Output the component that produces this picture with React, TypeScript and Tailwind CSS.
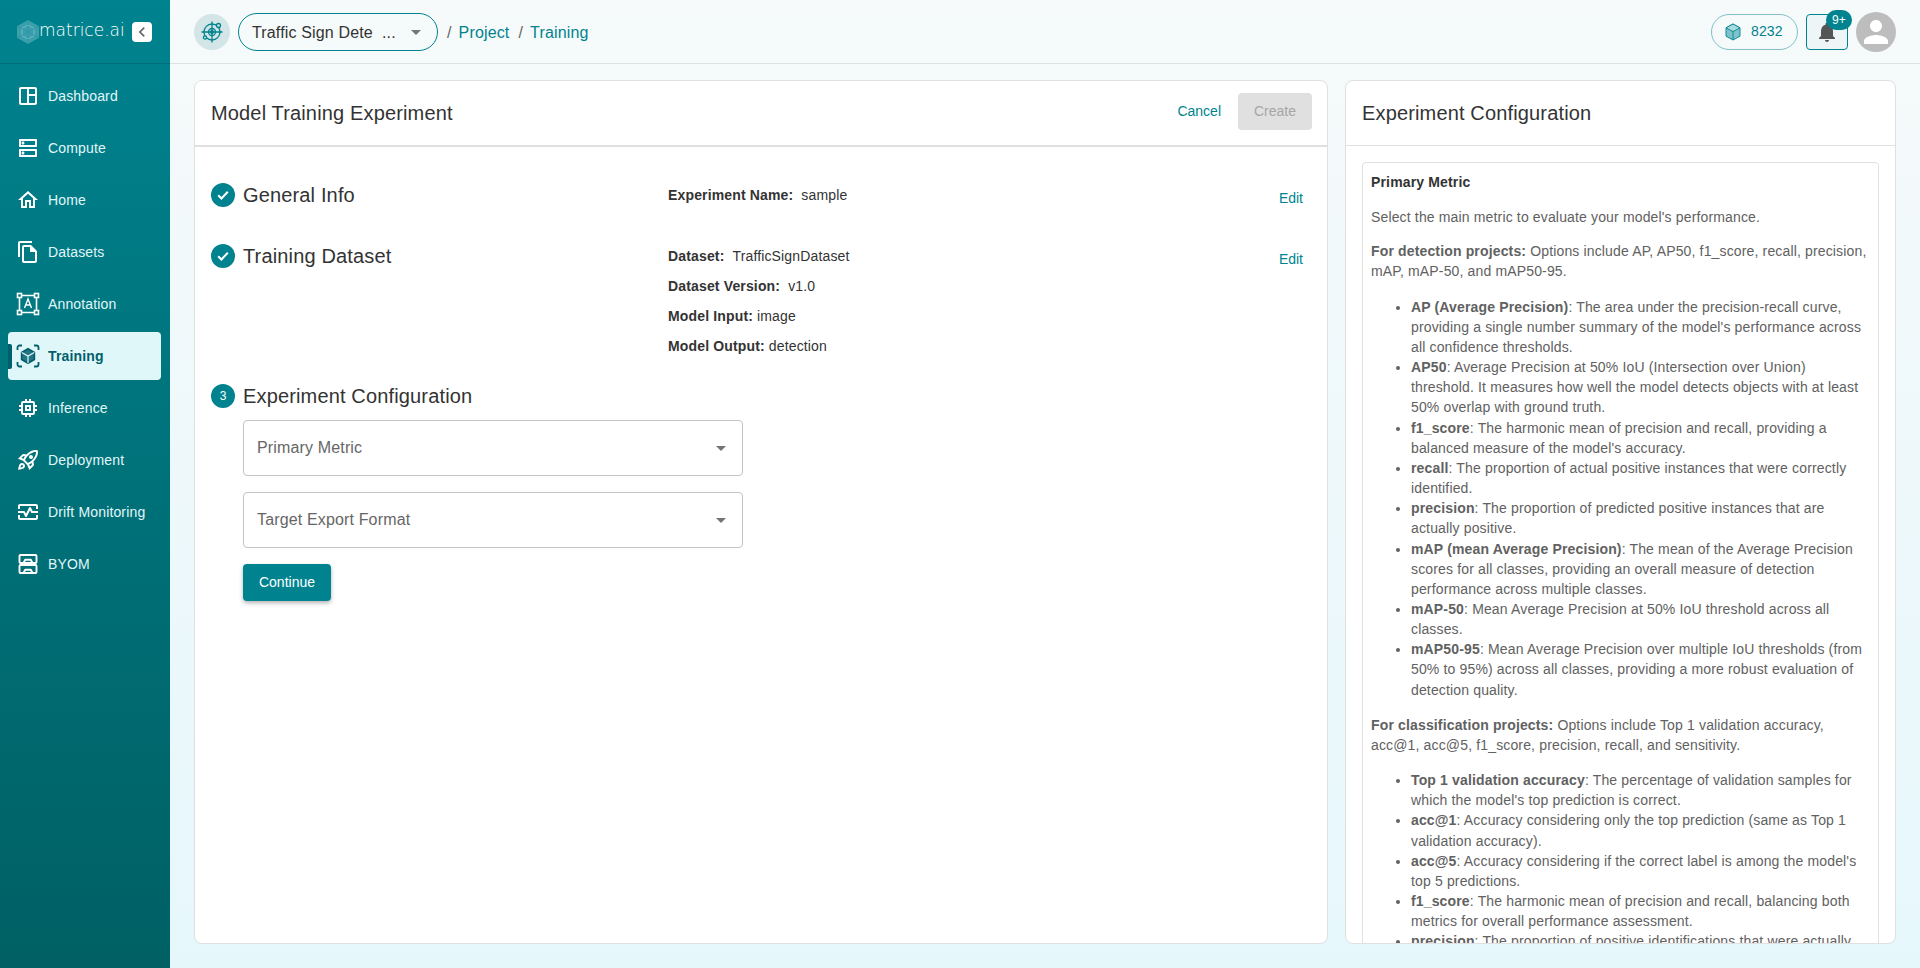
import React from "react";
import {
  MdOutlineSpaceDashboard,
  MdOutlineDns,
  MdOutlineHome,
  MdOutlineFileCopy,
  MdOutlineMemory,
  MdOutlineRocketLaunch,
  MdOutlineMonitorHeart,
  MdArrowDropDown,
  MdNotifications,
  MdPerson,
  MdChevronLeft,
} from "react-icons/md";

function AnnotationIcon() {
  return (
    <svg width="24" height="24" viewBox="0 0 24 24" fill="none" stroke="currentColor" strokeWidth="1.6">
      <rect x="1.500" y="1.500" width="4" height="4" />
      <rect x="18.500" y="1.500" width="4" height="4" />
      <rect x="1.500" y="18.500" width="4" height="4" />
      <rect x="18.500" y="18.500" width="4" height="4" />
      <path d="M5.500 3.500h13M5.500 20.500h13M3.500 5.500v13M20.500 5.500v13" />
      <path d="M8.500 16l3.500-9 3.500 9M9.700 13h4.600" strokeWidth="1.4" />
    </svg>
  );
}

function TrainingIcon() {
  return (
    <svg width="24" height="24" viewBox="0 0 24 24" fill="none" stroke="currentColor" strokeWidth="1.8">
      <path d="M1.500 6V3.500a2 2 0 0 1 2-2H6M18 1.500h2.500a2 2 0 0 1 2 2V6M22.500 18v2.500a2 2 0 0 1-2 2H18M6 22.500H3.500a2 2 0 0 1-2-2V18" />
      <path d="M12 4.800l6.300 3.600v7.200L12 19.200l-6.300-3.600V8.400z" fill="currentColor" fillOpacity="0.85" stroke="currentColor" />
      <path d="M5.700 8.400L12 12l6.300-3.600M12 12v7.200" stroke="#e0f7fa" strokeWidth="1.2" />
    </svg>
  );
}

function ByomIcon() {
  return (
    <svg width="24" height="24" viewBox="0 0 24 24" fill="none" stroke="currentColor" strokeWidth="1.9" strokeLinejoin="round">
      <rect x="3.500" y="3" width="17" height="8" rx="1" />
      <rect x="3.500" y="13" width="17" height="8" rx="1" />
      <path d="M7.500 11l1.700-3.200h5.600L16.500 11" />
      <path d="M7.500 21l1.700-3.200h5.600L16.500 21" />
    </svg>
  );
}

function Logo() {
  return (
    <svg width="24" height="26" viewBox="0 0 24 26" fill="none">
      <path d="M12 1l11 6.200v11.600L12 25 1 18.800V7.200z" fill="#4aa6b4" fillOpacity="0.8" />
      <path d="M12 6l6 3.400v7.200L12 20l-6-3.400V9.400z" stroke="#7ec8d2" strokeWidth="0.7" />
      <path d="M1 7.200l11 5.800 11-5.800M12 13v12M12 1v12M1 18.800L12 13l11 5.800" stroke="#2b93a3" strokeWidth="0.7" />
    </svg>
  );
}

function ProjectIcon() {
  return (
    <svg width="24" height="24" viewBox="0 0 24 24" fill="none" stroke="#00838f" strokeWidth="1.3">
      <circle cx="12" cy="12" r="8" />
      <circle cx="12" cy="12" r="3.500" />
      <circle cx="12" cy="12" r="1.400" fill="#00838f" />
      <path d="M12 1.500v21M1.500 12h21" />
      <circle cx="18.500" cy="5.500" r="2" fill="#d3e5e7" />
      <circle cx="5" cy="17.500" r="1.600" fill="#d3e5e7" />
    </svg>
  );
}

function CubeIcon() {
  return (
    <svg width="18" height="18" viewBox="0 0 18 18" stroke="#00838f" strokeWidth="0.9" strokeLinejoin="round">
      <path d="M9 1l7 3.800v8.400L9 17l-7-3.800V4.800z" fill="#7cc3cb" />
      <path d="M2 4.800L9 8.600l7-3.800L9 1z" fill="#a9dae0" />
      <path d="M9 8.600V17" fill="none" />
    </svg>
  );
}

function CheckGlyph() {
  return (
    <svg width="16" height="16" viewBox="0 0 16 16" fill="none" stroke="white" strokeWidth="2">
      <path d="M3.200 8.300l3.200 3.200 6.400-6.800" />
    </svg>
  );
}

const nav: { label: string; icon: React.ReactNode; active?: boolean }[] = [
  { label: "Dashboard", icon: <MdOutlineSpaceDashboard size={24} /> },
  { label: "Compute", icon: <MdOutlineDns size={24} /> },
  { label: "Home", icon: <MdOutlineHome size={24} /> },
  { label: "Datasets", icon: <MdOutlineFileCopy size={24} /> },
  { label: "Annotation", icon: <AnnotationIcon /> },
  { label: "Training", icon: <TrainingIcon />, active: true },
  { label: "Inference", icon: <MdOutlineMemory size={24} /> },
  { label: "Deployment", icon: <MdOutlineRocketLaunch size={24} /> },
  { label: "Drift Monitoring", icon: <MdOutlineMonitorHeart size={24} /> },
  { label: "BYOM", icon: <ByomIcon /> },
];

function Sidebar() {
  return (
    <aside className="w-[170px] shrink-0 h-[968px] bg-gradient-to-b from-[#00838f] to-[#006064] flex flex-col">
      <div className="h-[64px] border-b border-[#006f7a] flex items-center pl-[16px] shrink-0">
        <Logo />
        <span className="w-[93px] ml-[-1px] text-[17px] leading-[24px] font-extralight text-white font-['DejaVu_Sans',sans-serif] tracking-normal -mt-[3px] whitespace-nowrap">matrice.ai</span>
        <span className="w-[20px] h-[20px] bg-white rounded-[4px] flex items-center justify-center text-[#666]">
          <MdChevronLeft size={20} />
        </span>
      </div>
      <nav className="flex flex-col pt-[6px]">
        {nav.map((n) =>
          n.active ? (
            <div key={n.label} className="relative ml-[8px] w-[153px] h-[48px] my-[2px] rounded-[4px] bg-[#e0f7fa] flex items-center pl-[8px] text-[#005f6b] gap-[8px] text-[14px] font-bold tracking-[0.15px]">
              <span className="absolute left-0 top-[12px] w-[4px] h-[25px] bg-[#00606b] rounded-r-[2px]" />
              <span className="w-[24px] flex justify-center">{n.icon}</span>
              <span>{n.label}</span>
            </div>
          ) : (
            <div key={n.label} className="h-[52px] flex items-center pl-[16px] text-white gap-[8px]">
              <span className="w-[24px] flex justify-center">{n.icon}</span>
              <span className="text-[14px] text-[#e0f7fa] tracking-[0.15px]">{n.label}</span>
            </div>
          )
        )}
      </nav>
    </aside>
  );
}

function Header() {
  return (
    <header className="h-[64px] border-b border-[#dde3e4] flex items-center pl-[24px] pr-[24px] shrink-0 tracking-[0.15px]">
      <span className="w-[36px] h-[36px] rounded-full bg-[#d3e5e7] flex items-center justify-center">
        <ProjectIcon />
      </span>
      <div className="ml-[8px] w-[200px] h-[38px] rounded-[19px] border border-[#00838f] flex items-center pl-[13px] pr-[9px] justify-between text-[16px] text-[#333]">
        <span className="pt-[2px]">Traffic Sign Dete&nbsp; ...</span>
        <MdArrowDropDown size={24} className="text-[#757575]" />
      </div>
      <span className="ml-[9px] text-[16px] text-[#666] pt-[2px]">/</span>
      <span className="ml-[7px] text-[16px] text-[#00838f] pt-[2px]">Project</span>
      <span className="ml-[9px] text-[16px] text-[#666] pt-[2px]">/</span>
      <span className="ml-[7px] text-[16px] text-[#00838f] pt-[2px]">Training</span>
      <div className="ml-auto flex items-center">
        <div className="w-[87px] h-[36px] rounded-[18px] border border-[#80c1c7] flex items-center pl-[12px] gap-[9px] text-[14px] text-[#00838f]">
          <CubeIcon />
          <span>8232</span>
        </div>
        <div className="relative ml-[8px] w-[42px] h-[36px] rounded-[4px] border border-[#00838f] bg-[#eef5f7] flex items-center justify-center text-[#555]">
          <MdNotifications size={24} />
          <span className="absolute -top-[5px] left-[19px] w-[26px] h-[20px] rounded-full bg-[#00838f] text-white text-[12px] flex items-center justify-center">9+</span>
        </div>
        <div className="ml-[8px] w-[40px] h-[40px] rounded-full bg-[#bdbdbd] flex items-center justify-center text-white">
          <MdPerson size={36} />
        </div>
      </div>
    </header>
  );
}

function StepIcon({ n }: { n?: number }) {
  return (
    <span className="w-[24px] h-[24px] rounded-full bg-[#00838f] text-white flex items-center justify-center text-[12px] shrink-0">
      {n ? n : <CheckGlyph />}
    </span>
  );
}

function Detail({ label, value, gap }: { label: string; value: string; gap?: boolean }) {
  return (
    <div className="h-[30px] flex items-center text-[14px] text-[#333] tracking-[0.15px]">
      <b className={gap ? "mr-[8px]" : "mr-[4px]"}>{label}</b>
      <span>{value}</span>
    </div>
  );
}

function SelectBox({ label }: { label: string }) {
  return (
    <div className="w-[500px] h-[56px] rounded-[4px] border border-[#c4c4c4] flex items-center pl-[13px] pr-[9px] justify-between text-[16px] text-[#666] tracking-[0.15px]">
      <span>{label}</span>
      <MdArrowDropDown size={24} className="text-[#757575]" />
    </div>
  );
}

function MainCard() {
  return (
    <section className="w-[1134px] rounded-[8px] border border-[#e0e0e0] bg-white flex flex-col">
      <div className="h-[66px] border-b-2 border-[#e0e0e0] flex items-center pl-[16px] pr-[15px] shrink-0">
        <h1 className="text-[20px] text-[#333] tracking-[0.15px]">Model Training Experiment</h1>
        <span className="ml-auto text-[14px] text-[#00838f] -mt-[3px] mr-[1px]">Cancel</span>
        <span className="ml-[16px] w-[74px] h-[37px] rounded-[4px] bg-[#e0e0e0] text-[#a6a6a6] text-[14px] flex items-center justify-center -mt-[4px]">Create</span>
      </div>
      <div className="pl-[16px] pr-[24px] pt-[36px]">
        <div className="flex h-[61px]">
          <div className="w-[457px] flex items-start gap-[8px] shrink-0">
            <StepIcon />
            <h2 className="text-[20px] leading-[24px] text-[#333] tracking-[0.15px]">General Info</h2>
          </div>
          <div className="flex-1 -mt-[3px]">
            <Detail label="Experiment Name:" value="sample" gap />
          </div>
          <span className="text-[14px] text-[#00838f] mt-[5px]">Edit</span>
        </div>
        <div className="flex h-[140px]">
          <div className="w-[457px] flex items-start gap-[8px] shrink-0">
            <StepIcon />
            <h2 className="text-[20px] leading-[24px] text-[#333] tracking-[0.15px]">Training Dataset</h2>
          </div>
          <div className="flex-1 -mt-[3px]">
            <Detail label="Dataset:" value="TrafficSignDataset" gap />
            <Detail label="Dataset Version:" value="v1.0" gap />
            <Detail label="Model Input:" value="image" />
            <Detail label="Model Output:" value="detection" />
          </div>
          <span className="text-[14px] text-[#00838f] mt-[5px]">Edit</span>
        </div>
        <div className="flex items-center gap-[8px]">
          <StepIcon n={3} />
          <h2 className="text-[20px] leading-[24px] text-[#333] tracking-[0.15px]">Experiment Configuration</h2>
        </div>
        <div className="ml-[32px] mt-[12px] flex flex-col gap-[16px]">
          <SelectBox label="Primary Metric" />
          <SelectBox label="Target Export Format" />
          <button className="w-[88px] h-[37px] rounded-[4px] bg-[#00838f] text-white text-[14px] shadow-[0_2px_4px_rgba(0,0,0,0.3)]">Continue</button>
        </div>
      </div>
    </section>
  );
}

function Li({ b, t }: { b: string; t: string }) {
  return (
    <li className="list-disc">
      <b>{b}</b>: {t}
    </li>
  );
}

function ConfigCard() {
  return (
    <section className="w-[551px] rounded-[8px] border border-[#e0e0e0] bg-white flex flex-col overflow-hidden">
      <div className="h-[65px] border-b border-[#e0e0e0] flex items-center pl-[16px] shrink-0">
        <h1 className="text-[20px] text-[#333] tracking-[0.15px]">Experiment Configuration</h1>
      </div>
      <div className="flex-1 min-h-0 px-[16px] pt-[16px] overflow-hidden">
        <div className="border border-[#e0e0e0] rounded-[4px] px-[8px] pt-[9px] text-[14px] leading-[20.16px] tracking-[0.15px] text-[#616161]">
          <p className="font-bold text-[#333]">Primary Metric</p>
          <p className="mt-[15px]">Select the main metric to evaluate your model's performance.</p>
          <p className="mt-[14px]"><b>For detection projects:</b> Options include AP, AP50, f1_score, recall, precision, mAP, mAP-50, and mAP50-95.</p>
          <ul className="mt-[15px] pl-[40px]">
            <Li b="AP (Average Precision)" t="The area under the precision-recall curve, providing a single number summary of the model's performance across all confidence thresholds." />
            <Li b="AP50" t="Average Precision at 50% IoU (Intersection over Union) threshold. It measures how well the model detects objects with at least 50% overlap with ground truth." />
            <Li b="f1_score" t="The harmonic mean of precision and recall, providing a balanced measure of the model's accuracy." />
            <Li b="recall" t="The proportion of actual positive instances that were correctly identified." />
            <Li b="precision" t="The proportion of predicted positive instances that are actually positive." />
            <Li b="mAP (mean Average Precision)" t="The mean of the Average Precision scores for all classes, providing an overall measure of detection performance across multiple classes." />
            <Li b="mAP-50" t="Mean Average Precision at 50% IoU threshold across all classes." />
            <Li b="mAP50-95" t="Mean Average Precision over multiple IoU thresholds (from 50% to 95%) across all classes, providing a more robust evaluation of detection quality." />
          </ul>
          <p className="mt-[15px]"><b>For classification projects:</b> Options include Top 1 validation accuracy, acc@1, acc@5, f1_score, precision, recall, and sensitivity.</p>
          <ul className="mt-[15px] pl-[40px]">
            <Li b="Top 1 validation accuracy" t="The percentage of validation samples for which the model's top prediction is correct." />
            <Li b="acc@1" t="Accuracy considering only the top prediction (same as Top 1 validation accuracy)." />
            <Li b="acc@5" t="Accuracy considering if the correct label is among the model's top 5 predictions." />
            <Li b="f1_score" t="The harmonic mean of precision and recall, balancing both metrics for overall performance assessment." />
            <Li b="precision" t="The proportion of positive identifications that were actually correct." />
          </ul>
        </div>
      </div>
    </section>
  );
}

export default function App() {
  return (
    <div className="w-[1920px] h-[968px] flex overflow-hidden font-['Liberation_Sans',Arial,sans-serif] bg-gradient-to-b from-[#f6fafa] to-[#e6f7fc]">
      <Sidebar />
      <div className="flex-1 min-w-0 flex flex-col">
        <Header />
        <main className="flex-1 min-h-0 flex gap-[17px] pl-[24px] pt-[16px] pb-[24px]">
          <MainCard />
          <ConfigCard />
        </main>
      </div>
    </div>
  );
}
